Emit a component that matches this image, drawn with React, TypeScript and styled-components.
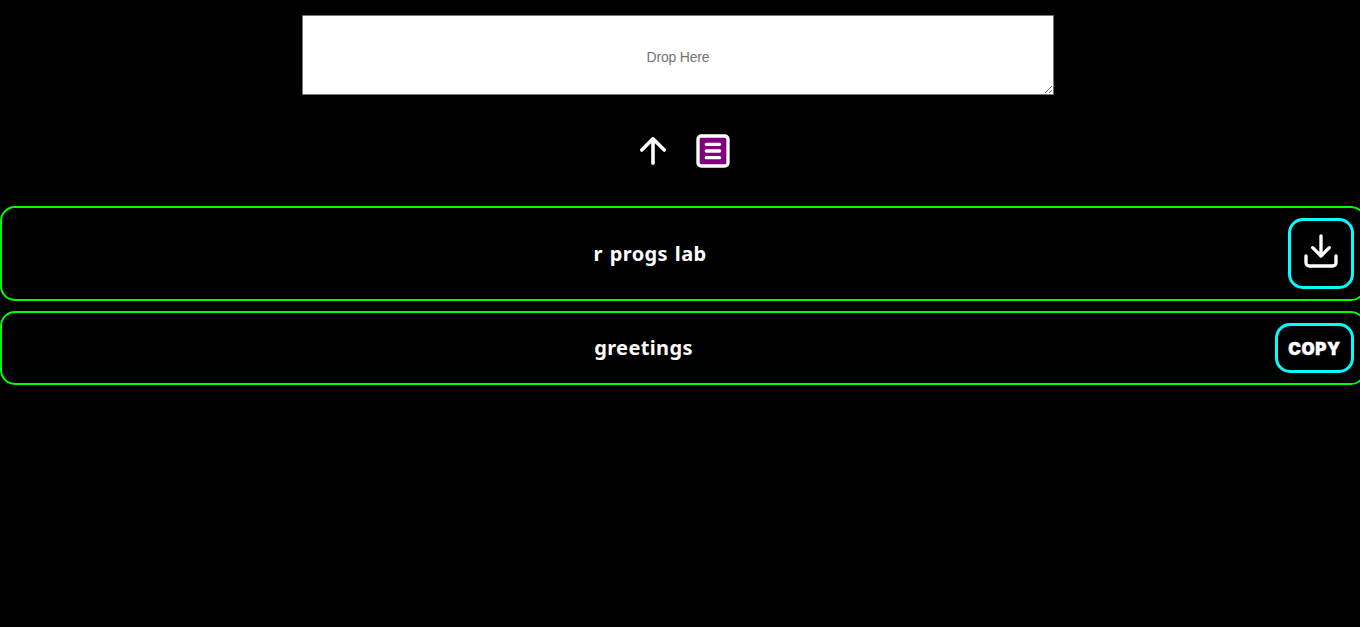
import React from "react";
import styled, { createGlobalStyle } from "styled-components";

const GlobalStyle = createGlobalStyle`
  * { box-sizing: border-box; }
  body { margin: 0; background: #000; overflow: hidden; }
`;

const Page = styled.main`
  display: flex;
  flex-direction: column;
  width: 1366px;
  min-height: 627px;
  padding-top: 15px;
  background: #000;
  color: #fff;
`;

const DropArea = styled.textarea`
  width: 752px;
  height: 80px;
  margin: 0 0 0 302px;
  padding: 33px 2px 2px;
  border: 1px solid #767676;
  border-radius: 1px;
  background: #fff;
  font: 14px/17px "Liberation Sans", Arial, sans-serif;
  letter-spacing: -0.2px;
  text-align: center;
  resize: both;
  &::placeholder { color: #757575; }
`;

const Toolbar = styled.nav`
  display: flex;
  gap: 20px;
  height: 40px;
  margin: 36px 0 35px 633px;
`;

const Icon = styled.svg<{ $stroke?: number }>`
  display: block;
  width: 40px;
  height: 40px;
  fill: none;
  stroke: #fff;
  stroke-width: ${(p) => p.$stroke ?? 2};
  stroke-linecap: round;
  stroke-linejoin: round;
`;

const List = styled.section`
  display: flex;
  flex-direction: column;
  gap: 10px;
`;

const Row = styled.article`
  display: flex;
  align-items: center;
  padding: 10px;
  border: 2px solid #0f0;
  border-radius: 15px;
`;

const Title = styled.h2`
  flex: 1;
  margin: 0;
  font: 700 20px/28px "Noto Sans", sans-serif;
  letter-spacing: 0.35px;
  word-spacing: 1.4px;
  text-align: center;
`;

const Action = styled.button<{ $text?: boolean }>`
  display: flex;
  justify-content: center;
  align-items: ${(p) => (p.$text ? "center" : "flex-start")};
  width: ${(p) => (p.$text ? 79 : 66)}px;
  height: ${(p) => (p.$text ? 50 : 71)}px;
  padding: ${(p) => (p.$text ? "2px 0 0" : "10px")};
  border: 3px solid #0ff;
  border-radius: 15px;
  background: #000;
  color: #fff;
  font: 900 17px/22px Inter, sans-serif;
  letter-spacing: 0.6px;
  -webkit-text-stroke: 0.4px #fff;
`;

export default function App() {
  return (
    <>
      <GlobalStyle />
      <Page>
        <DropArea placeholder="Drop Here" />
        <Toolbar>
          <Icon viewBox="0 0 512 512" $stroke={46}>
            <path d="M112 244 256 100 400 244M256 120V412" />
          </Icon>
          <Icon viewBox="0 0 24 24">
            <rect x="3" y="3" width="18" height="18" rx="2" fill="purple" />
            <path d="M8 8h8M8 12h8M8 16h8" />
          </Icon>
        </Toolbar>
        <List>
          <Row>
            <Title>r progs lab</Title>
            <Action aria-label="Download">
              <Icon viewBox="0 0 24 24">
                <path d="M21 15v4a2 2 0 0 1-2 2H5a2 2 0 0 1-2-2v-4M7 10l5 5 5-5M12 15V3" />
              </Icon>
            </Action>
          </Row>
          <Row>
            <Title>greetings</Title>
            <Action $text>COPY</Action>
          </Row>
        </List>
      </Page>
    </>
  );
}
